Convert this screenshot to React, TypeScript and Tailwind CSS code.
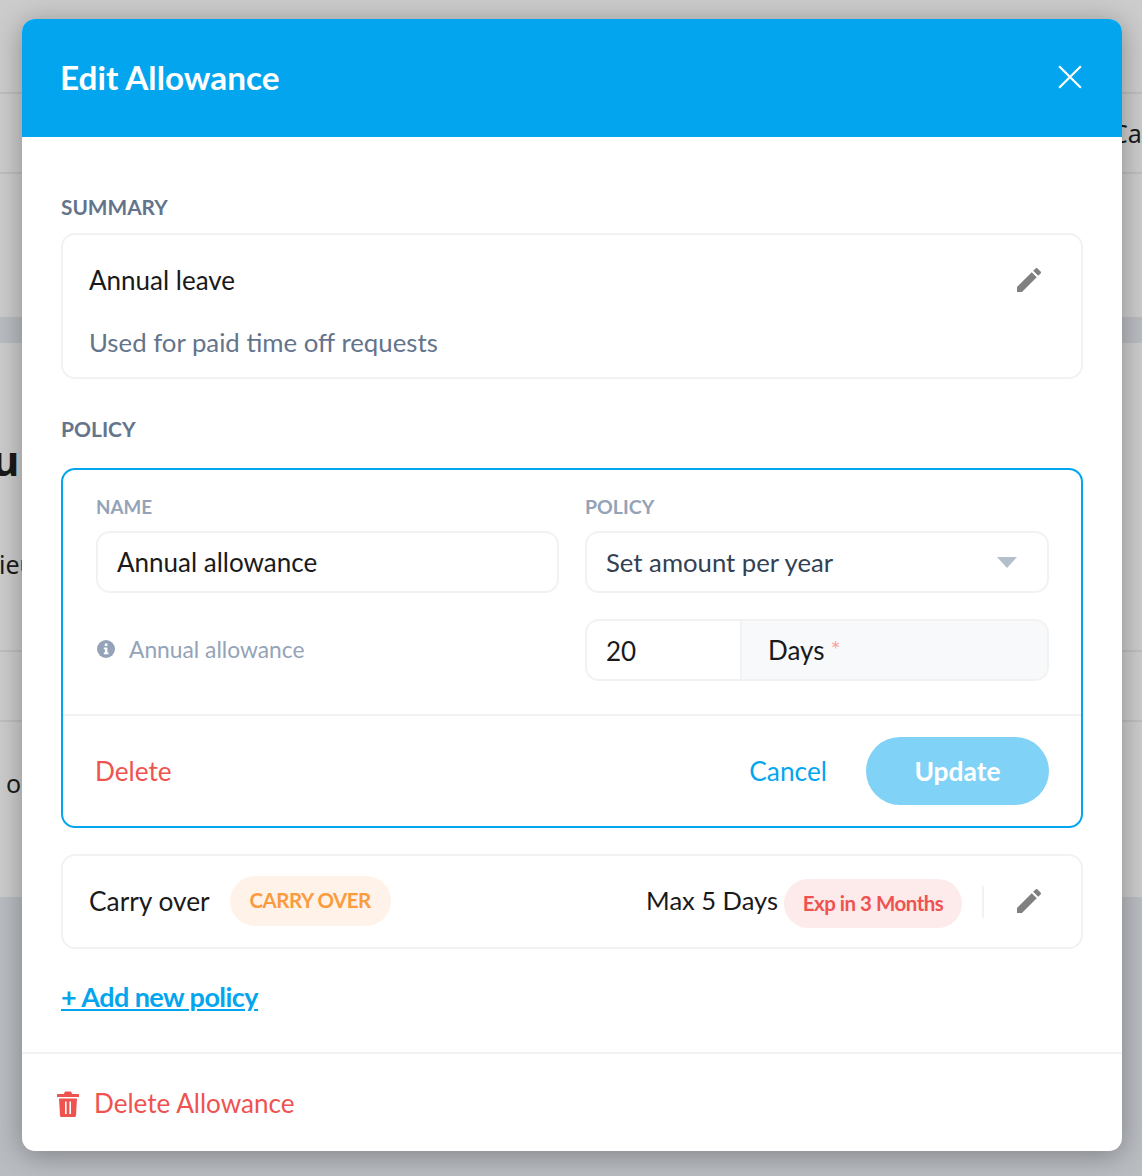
const F = "font-['Lato','Liberation_Sans',sans-serif]";
function Pencil() {
  return (
    <svg viewBox="3 3 18 18" className="h-[24px] w-[24px] fill-[#808080]">
      <path d="M3 17.25V21h3.75L17.81 9.94l-3.75-3.75L3 17.25zM20.71 7.04c.39-.39.39-1.02 0-1.41l-2.34-2.34c-.39-.39-1.02-.39-1.41 0l-1.83 1.83 3.75 3.75 1.83-1.83z" />
    </svg>
  );
}
function Trash() {
  return (
    <svg viewBox="0 0 22 26" className="h-[26px] w-[22px] fill-[#ef5350]">
      <path fillRule="evenodd" d="M8 0.500h6l1.200 2.500H21.500a.5.5 0 0 1 .5.5V6H0V3.500a.5.5 0 0 1 .5-.5H6.800zM2 7.500h18l-1 17a1.500 1.500 0 0 1-1.500 1.500h-13A1.500 1.500 0 0 1 3 24.500zM8 10.500v12.500h1.600V10.500zM12.400 10.500v12.500h1.600V10.500z" />
    </svg>
  );
}
function Info() {
  return (
    <svg viewBox="0 0 18 18" className="h-[18px] w-[18px]">
      <circle cx="9" cy="9" r="9" fill="#94a3b8" />
      <rect x="7.800" y="3.500" width="2.600" height="2.500" fill="#fff" />
      <path d="M6.800 7.500h3.600v5h1.100v1.700H6.800v-1.700h1.100V9.200H6.800z" fill="#fff" />
    </svg>
  );
}
export default function App() {
  return (
    <div className={`relative h-[1176px] w-[1142px] overflow-hidden bg-[#cccccc] ${F} text-[#1a1a1a]`}>
      <div className="flex h-[1176px] flex-col text-[26px]">
        <div className="h-[94px] border-b-2 border-[#bfbfbf]" />
        <div className="flex h-[80px] items-center justify-end border-b-2 border-[#bfbfbf] font-['Noto_Sans',sans-serif] text-[25px] leading-none"><span className="mr-[-14px] w-[44px]">Ca</span></div>
        <div className="h-[143px]" />
        <div className="h-[26px] bg-[#b9bcc1]" />
        <div className="h-[309px] border-b-2 border-[#bfbfbf] font-['Noto_Sans',sans-serif]">
          <div className="ml-[-8px] mt-[91px] text-[42px] font-bold leading-[52px]">u</div>
          <div className="ml-[-1px] mt-[62px] text-[25px] leading-[32px]">ieu</div>
        </div>
        <div className="h-[70px] border-b-2 border-[#bfbfbf]" />
        <div className="h-[175px] pt-[44px] pl-[6px] font-['Noto_Sans',sans-serif] text-[25px] leading-[34px]">o</div>
        <div className="flex-1 bg-[#b9bcc1]" />
      </div>
      <div className="absolute left-[22px] top-[19px] flex h-[1132px] w-[1100px] flex-col overflow-hidden rounded-[13px] bg-white shadow-[0_4px_28px_rgba(0,0,0,0.32)]">
        <div className="flex h-[118px] shrink-0 items-center justify-between bg-[#03a6ee] pl-[38px] pr-[39px] text-white">
          <h1 className="mb-[1px] text-[33.300px] font-bold leading-none">Edit Allowance</h1>
          <svg viewBox="0 0 24 24" className="mb-[2px] h-[26px] w-[26px] stroke-white stroke-[2px]"><path d="M2 2l20 20M22 2L2 22" /></svg>
        </div>
        <div className="flex flex-1 flex-col px-[39px]">
          <div className="mt-[58px] text-[20.800px] font-bold leading-[24px] text-[#64748b]">SUMMARY</div>
          <div className="mt-[14px] flex h-[146px] flex-col rounded-[14px] border-2 border-[#f2f2f2] px-[26px]">
            <div className="mt-[15px] flex h-[60px] items-center justify-between pr-[14px]">
              <span className="text-[26px] leading-none">Annual leave</span>
              <Pencil />
            </div>
            <div className="mt-[2px] text-[25.800px] leading-[60px] text-[#64748b]">Used for paid time off requests</div>
          </div>
          <div className="mt-[38px] text-[21px] font-bold leading-[24px] text-[#64748b]">POLICY</div>
          <div className="mt-[27px] flex h-[360px] flex-col rounded-[14px] border-2 border-[#03a6ee]">
            <div className="grid h-[246px] grid-cols-[463px_464px] gap-x-[26px] border-b-2 border-[#f2f2f2] pl-[33px] pr-[32px] pt-[25px]">
              <div>
                <div className="text-[18.800px] font-bold leading-[24px] text-[#94a3b8]">NAME</div>
                <div className="mt-[12px] flex h-[62px] items-center rounded-[14px] border-2 border-[#f2f2f2] px-[19px] text-[26px]">Annual allowance</div>
                <div className="mt-[26px] flex h-[60px] items-center text-[22.800px] text-[#94a3b8]"><span className="ml-px mr-[14px]"><Info /></span>Annual allowance</div>
              </div>
              <div>
                <div className="text-[19.500px] font-bold leading-[24px] text-[#94a3b8]">POLICY</div>
                <div className="mt-[12px] flex h-[62px] items-center justify-between rounded-[14px] border-2 border-[#f2f2f2] pl-[19px] pr-[30px] text-[25.700px] text-[#334155]">
                  Set amount per year
                  <span className="h-0 w-0 border-x-[10px] border-t-[11px] border-x-transparent border-t-[#b4bfcc]" />
                </div>
                <div className="mt-[26px] flex h-[62px] overflow-hidden rounded-[14px] border-2 border-[#f2f2f2] text-[26px]">
                  <div className="flex w-[155px] items-center border-r-2 border-[#f2f2f2] pl-[19px] pt-[2px]">20</div>
                  <div className="flex flex-1 items-center bg-[#f8f9fb] pl-[26px]">Days<span className="mb-[2px] ml-[6px] text-[24px] leading-none text-[#fca5a5]">*</span></div>
                </div>
              </div>
            </div>
            <div className="flex flex-1 items-center justify-between pl-[32px] pr-[32px]">
              <span className="mt-[2px] text-[26.200px] text-[#ef5350]">Delete</span>
              <div className="flex items-center gap-[39px]">
                <span className="mt-[2px] text-[26.300px] text-[#03a6ee]">Cancel</span>
                <span className="flex h-[68px] w-[183px] items-center justify-center rounded-full bg-[#81d2f7] pt-[1px] text-[26.400px] font-bold text-white">Update</span>
              </div>
            </div>
          </div>
          <div className="mt-[26px] flex h-[95px] items-center justify-between rounded-[14px] border-2 border-[#f2f2f2] pl-[26px] pr-[26px]">
            <div className="flex items-center gap-[20px]">
              <span className="text-[26.300px]">Carry over</span>
              <span className="mb-[2px] flex h-[50px] w-[161px] items-center justify-center rounded-full bg-[#fff3e9] text-[20.500px] font-bold tracking-[-0.5px] text-[#fb9b3f]">CARRY OVER</span>
            </div>
            <div className="flex items-center">
              <span className="mb-[2px] mr-[6px] text-[25.500px]">Max 5 Days</span>
              <span className="mt-[4px] flex h-[49px] w-[178px] items-center justify-center rounded-full bg-[#fdeaea] text-[20.500px] font-bold tracking-[-0.5px] text-[#ef5350]">Exp in 3 Months</span>
              <span className="ml-[20px] mr-[33px] h-[32px] w-[2px] bg-[#f2f2f2]" />
              <span className="mb-[2px] mr-[14px]"><Pencil /></span>
            </div>
          </div>
          <div className="mt-[31px] text-[27px] font-bold leading-[34px] tracking-[-0.55px] text-[#03a6ee] underline">+ Add new policy</div>
        </div>
        <div className="flex h-[99px] shrink-0 items-center border-t-2 border-[#f2f2f2] pl-[35px] pt-[2px] text-[26.100px] text-[#ef5350]">
          <Trash /><span className="ml-[15px]">Delete Allowance</span>
        </div>
      </div>
    </div>
  );
}
